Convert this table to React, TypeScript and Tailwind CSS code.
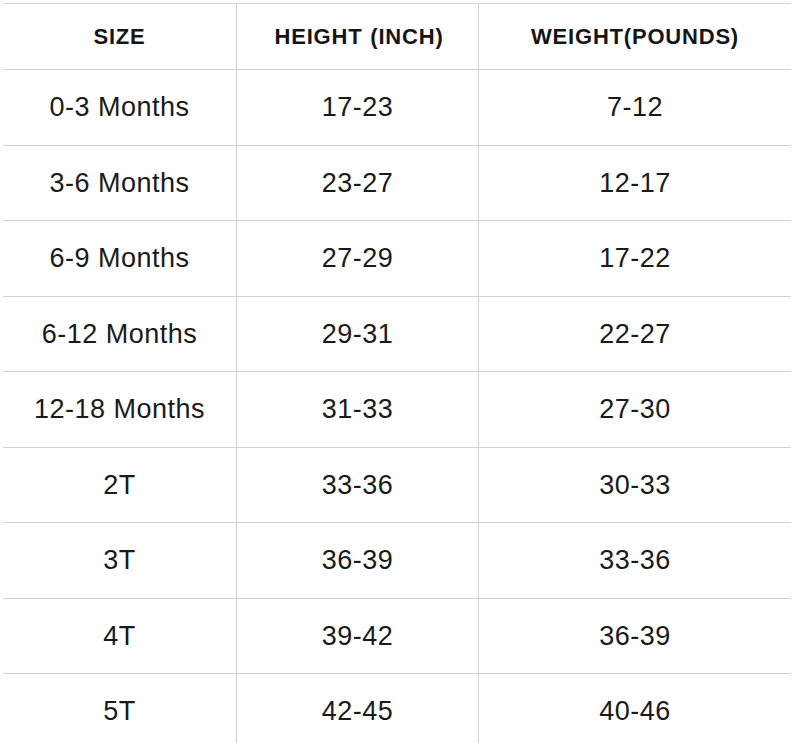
import React from "react";

const rows: [string, string, string][] = [
  ["0-3 Months", "17-23", "7-12"],
  ["3-6 Months", "23-27", "12-17"],
  ["6-9 Months", "27-29", "17-22"],
  ["6-12 Months", "29-31", "22-27"],
  ["12-18 Months", "31-33", "27-30"],
  ["2T", "33-36", "30-33"],
  ["3T", "36-39", "33-36"],
  ["4T", "39-42", "36-39"],
  ["5T", "42-45", "40-46"],
];

const heights = [
  "h-[76px]",
  "h-[75px]",
  "h-[76px]",
  "h-[75px]",
  "h-[76px]",
  "h-[75px]",
  "h-[76px]",
  "h-[75px]",
  "h-[76px]",
];

export default function App() {
  return (
    <div
      className="w-[797px] h-[743px] overflow-hidden bg-white pt-[3px] pl-[3px]"
      style={{ fontFamily: '"Liberation Sans", Arial, sans-serif' }}
    >
      <div className="w-[788px] border-t border-[#d6d6d6]">
        <div className="grid grid-cols-[234px_242px_312px] h-[66px] border-b border-[#d2d2d2] text-[22px] font-bold text-[#151515] tracking-[0.8px]">
          <div className="flex items-center justify-center border-r border-[#d2d2d2]">SIZE</div>
          <div className="flex items-center justify-center border-r border-[#d2d2d2] [word-spacing:1px] pl-[3px]">HEIGHT (INCH)</div>
          <div className="flex items-center justify-center">WEIGHT(POUNDS)</div>
        </div>
        {rows.map((r, i) => (
          <div
            key={i}
            className={`grid grid-cols-[234px_242px_312px] ${heights[i]} border-b border-[#d2d2d2] text-[27px] text-[#1a1a1a] tracking-[0.5px]`}
          >
            <div className="flex items-center justify-center border-r border-[#d2d2d2]">{r[0]}</div>
            <div className="flex items-center justify-center border-r border-[#d2d2d2]">{r[1]}</div>
            <div className="flex items-center justify-center">{r[2]}</div>
          </div>
        ))}
      </div>
    </div>
  );
}
